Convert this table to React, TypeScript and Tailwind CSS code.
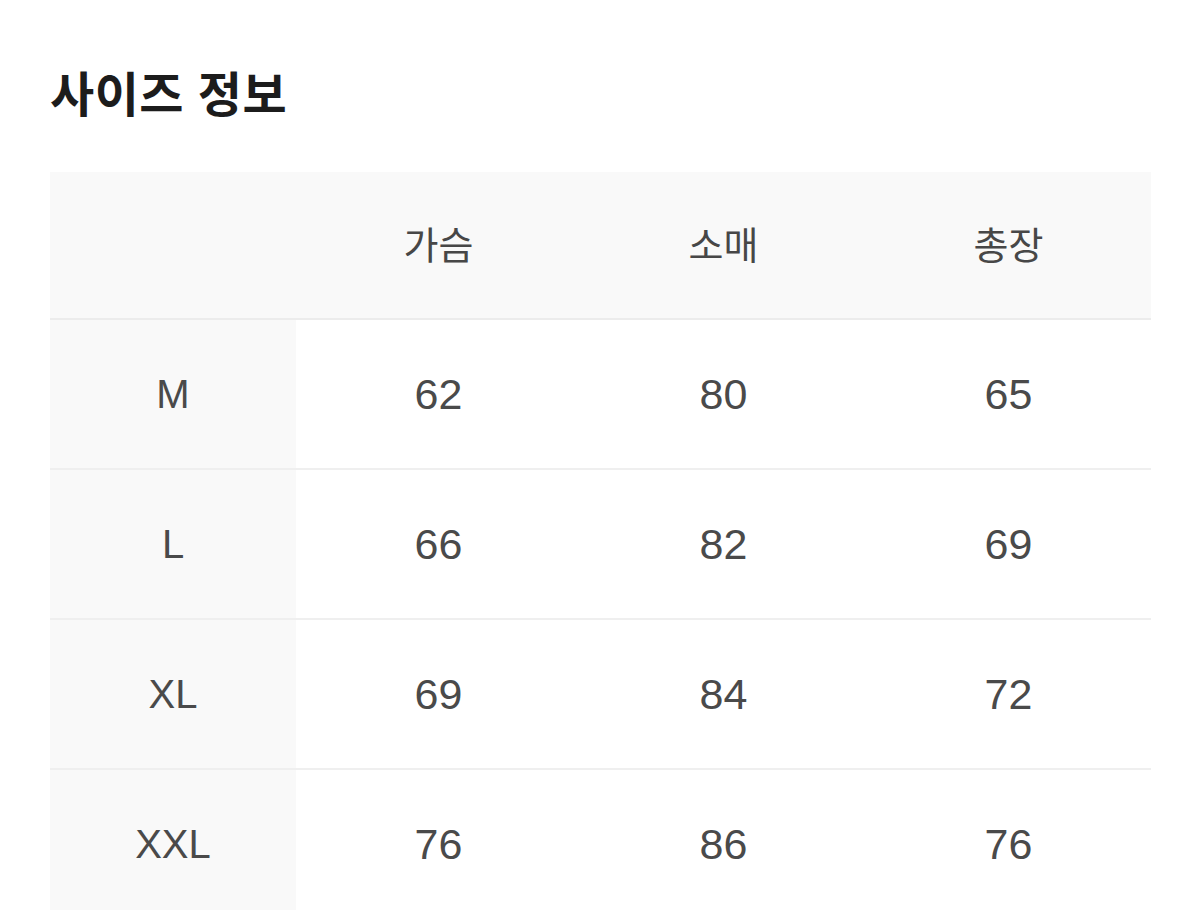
import React from 'react';

const columns = ['가슴', '소매', '총장'];

const rows = [
  { size: 'M', values: [62, 80, 65] },
  { size: 'L', values: [66, 82, 69] },
  { size: 'XL', values: [69, 84, 72] },
  { size: 'XXL', values: [76, 86, 76] },
];

const font = { fontFamily: '"Liberation Sans", "Noto Sans CJK KR", sans-serif' };

const App: React.FC = () => {
  return (
    <div className="w-[1200px] h-[910px] overflow-hidden bg-white" style={font}>
      <div className="pl-[50px] pr-[49px] pt-[66px]">
        <h2 className="text-[48px] leading-[60px] font-bold text-[#1c1c1c] tracking-[0.5px]">사이즈 정보</h2>

        {/* 사이즈 표 */}
        <div className="mt-[46px]">
          <div className="grid grid-cols-[246px_1fr_1fr_1fr] h-[148px] bg-[#f9f9f9] border-b-2 border-[#ececec]">
            <div />
            {columns.map((c) => (
              <div key={c} className="flex items-center justify-center pt-[3px] text-[38px] text-[#474747]">
                {c}
              </div>
            ))}
          </div>

          {rows.map((r) => (
            <div key={r.size} className="grid grid-cols-[246px_1fr_1fr_1fr] h-[150px] border-b-2 border-[#efefef]">
              <div className="flex items-center justify-center bg-[#f9f9f9] text-[40px] text-[#4a4a4a]">
                {r.size}
              </div>
              {r.values.map((v, i) => (
                <div key={i} className="flex items-center justify-center text-[43px] text-[#4a4a4a]">
                  {v}
                </div>
              ))}
            </div>
          ))}
        </div>
      </div>
    </div>
  );
};

export default App;
